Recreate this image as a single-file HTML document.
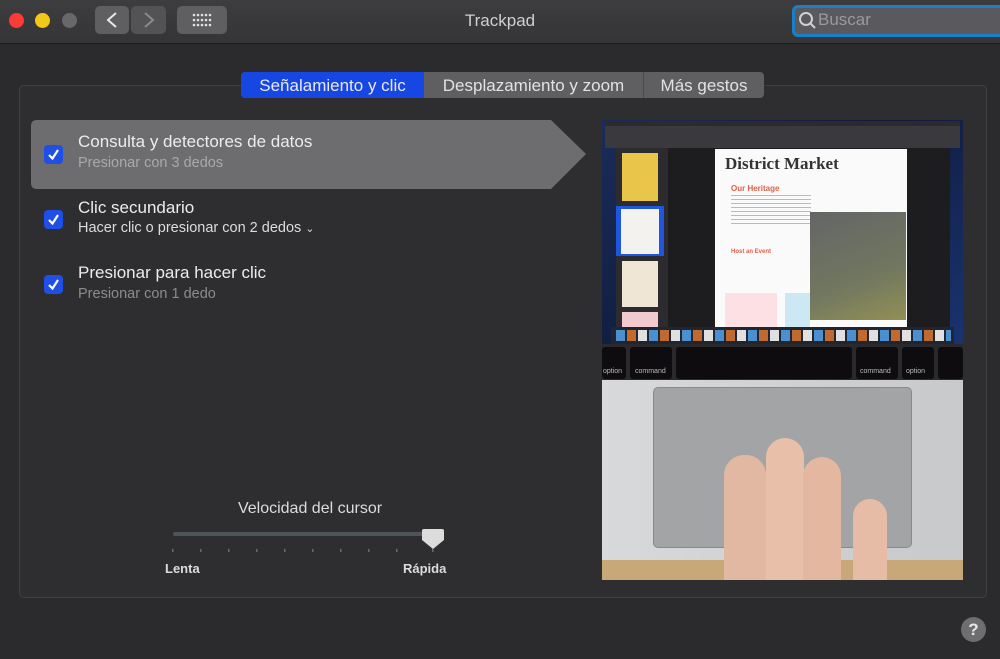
<!DOCTYPE html>
<html><head><meta charset="utf-8"><style>
*{margin:0;padding:0;box-sizing:border-box}
body{width:1000px;height:659px;background:#2b2b2d;font-family:"Liberation Sans",sans-serif;position:relative;overflow:hidden;color:#e6e6e6}
.a{position:absolute}
</style></head><body>
<div class="a" style="left:0;top:0;width:1000px;height:44px;background:linear-gradient(#3d3d40,#353537);border-bottom:1px solid #1c1c1e"></div>
<div class="a" style="left:9px;top:13px;width:15px;height:15px;border-radius:50%;background:#fb3b37"></div>
<div class="a" style="left:35px;top:13px;width:15px;height:15px;border-radius:50%;background:#f2c918"></div>
<div class="a" style="left:62px;top:13px;width:15px;height:15px;border-radius:50%;background:#68686b"></div>
<div class="a" style="left:95px;top:6px;width:34px;height:28px;border-radius:5px;background:#5f5f62"></div>
<div class="a" style="left:131px;top:6px;width:35px;height:28px;border-radius:5px;background:#535356"></div>
<svg class="a" style="left:95px;top:6px" width="71" height="28"><path d="M21 7 L13 14 L21 21" stroke="#e8e8e8" stroke-width="2" fill="none"/><path d="M50 7 L58 14 L50 21" stroke="#8a8a8c" stroke-width="2" fill="none"/></svg>
<div class="a" style="left:177px;top:6px;width:50px;height:28px;border-radius:5px;background:#5f5f62"></div>
<svg class="a" style="left:192px;top:13px" width="20" height="14"><g fill="#e0e0e0"><circle cx="2" cy="2" r="1.3"/><circle cx="6" cy="2" r="1.3"/><circle cx="10" cy="2" r="1.3"/><circle cx="14" cy="2" r="1.3"/><circle cx="18" cy="2" r="1.3"/><circle cx="2" cy="7" r="1.3"/><circle cx="6" cy="7" r="1.3"/><circle cx="10" cy="7" r="1.3"/><circle cx="14" cy="7" r="1.3"/><circle cx="18" cy="7" r="1.3"/><circle cx="2" cy="12" r="1.3"/><circle cx="6" cy="12" r="1.3"/><circle cx="10" cy="12" r="1.3"/><circle cx="14" cy="12" r="1.3"/><circle cx="18" cy="12" r="1.3"/></g></svg>
<div class="a" style="left:440px;top:11px;width:120px;text-align:center;font-size:17px;color:#cfcfcf">Trackpad</div>
<div class="a" style="left:792px;top:5px;width:215px;height:32px;border-radius:6px;border:3px solid #1b7fc7;background:#5a5a5e"></div>
<svg class="a" style="left:798px;top:11px" width="20" height="20"><circle cx="8" cy="8" r="6" stroke="#d0d0d0" stroke-width="2" fill="none"/><path d="M12 12 L17 17" stroke="#d0d0d0" stroke-width="2"/></svg>
<div class="a" style="left:818px;top:10px;font-size:17px;color:#9a9a9c">Buscar</div>

<div class="a" style="left:19px;top:85px;width:968px;height:513px;border:1px solid #3f4042;border-radius:5px;background:#2e2e30"></div>
<div class="a" style="left:241px;top:72px;width:523px;height:26px;border-radius:4px;background:#5f5f62"></div>
<div class="a" style="left:241px;top:72px;width:183px;height:26px;border-radius:4px 0 0 4px;background:#1747e3"></div>
<div class="a" style="left:643px;top:72px;width:1px;height:26px;background:#4a4a4c"></div>
<div class="a" style="left:241px;top:76px;width:183px;text-align:center;font-size:17px;color:#e8e8f0">Señalamiento y clic</div>
<div class="a" style="left:424px;top:76px;width:219px;text-align:center;font-size:17px;color:#e2e2e2">Desplazamiento y zoom</div>
<div class="a" style="left:644px;top:76px;width:120px;text-align:center;font-size:17px;color:#e2e2e2">Más gestos</div>

<svg class="a" style="left:31px;top:120px" width="556" height="70"><path d="M6 0 H520 L555 34 L520 69 H6 Q0 69 0 63 V6 Q0 0 6 0Z" fill="#6d6d70"/></svg>
<div class="a" style="left:44px;top:145px;width:19px;height:19px;border-radius:4px;background:#1f4fe6"></div>
<div class="a" style="left:44px;top:210px;width:19px;height:19px;border-radius:4px;background:#1f4fe6"></div>
<div class="a" style="left:44px;top:275px;width:19px;height:19px;border-radius:4px;background:#1f4fe6"></div>
<svg class="a" style="left:44px;top:145px" width="19" height="150"><g stroke="#fff" stroke-width="2.2" fill="none"><path d="M5 10 L8.5 13.5 L14 5"/><path d="M5 75 L8.5 78.5 L14 70"/><path d="M5 140 L8.5 143.5 L14 135"/></g></svg>
<div class="a" style="left:78px;top:132px;font-size:17px;color:#ececec">Consulta y detectores de datos</div>
<div class="a" style="left:78px;top:155px;font-size:14.5px;color:#a9a9ab">Presionar con 3 dedos</div>
<div class="a" style="left:78px;top:198px;font-size:17px;color:#ececec">Clic secundario</div>
<div class="a" style="left:78px;top:220px;font-size:14.5px;color:#dcdcdc">Hacer clic o presionar con 2 dedos <span style="font-size:11px">&#8964;</span></div>
<div class="a" style="left:78px;top:263px;font-size:17px;color:#ececec">Presionar para hacer clic</div>
<div class="a" style="left:78px;top:286px;font-size:14.5px;color:#8c8c8e">Presionar con 1 dedo</div>

<div class="a" style="left:160px;top:500px;width:300px;text-align:center;font-size:16px;color:#dcdcdc">Velocidad del cursor</div>
<div class="a" style="left:173px;top:532px;width:262px;height:4px;border-radius:2px;background:#4e5558"></div>
<svg class="a" style="left:170px;top:528px" width="280" height="30"><g fill="#6a6a6c"><rect x="2" y="21" width="1.5" height="3"/><rect x="30" y="21" width="1.5" height="3"/><rect x="58" y="21" width="1.5" height="3"/><rect x="86" y="21" width="1.5" height="3"/><rect x="114" y="21" width="1.5" height="3"/><rect x="142" y="21" width="1.5" height="3"/><rect x="170" y="21" width="1.5" height="3"/><rect x="198" y="21" width="1.5" height="3"/><rect x="226" y="21" width="1.5" height="3"/><rect x="262" y="21" width="1.5" height="3"/></g><path d="M254 1 H272 Q274 1 274 3 V12 L263 21 L252 12 V3 Q252 1 254 1Z" fill="#dcdcdc"/></svg>
<div class="a" style="left:165px;top:561px;font-size:13px;color:#dcdcdc;font-weight:bold">Lenta</div>
<div class="a" style="left:403px;top:561px;font-size:13px;color:#dcdcdc;font-weight:bold">Rápida</div>

<!-- image -->
<div class="a" style="left:602px;top:120px;width:361px;height:225px;background:linear-gradient(135deg,#1b2c5a,#0f1b3c 50%,#1a3370)"></div>
<div class="a" style="left:605px;top:121px;width:355px;height:5px;background:#2a2a30"></div>
<div class="a" style="left:605px;top:126px;width:355px;height:22px;background:#3a3a3e"></div>
<div class="a" style="left:616px;top:148px;width:52px;height:183px;background:#2c2c30"></div>
<div class="a" style="left:622px;top:153px;width:36px;height:48px;background:#e9c54a"></div>
<div class="a" style="left:616px;top:206px;width:48px;height:50px;background:#1e56e0"></div>
<div class="a" style="left:621px;top:209px;width:38px;height:45px;background:#f4f2ee"></div>
<div class="a" style="left:622px;top:261px;width:36px;height:46px;background:#efe6d6"></div>
<div class="a" style="left:622px;top:312px;width:36px;height:15px;background:#f2c9cf"></div>
<div class="a" style="left:668px;top:148px;width:282px;height:183px;background:#1d1d20"></div>
<div class="a" style="left:715px;top:149px;width:192px;height:182px;background:#fafafa"></div>
<div class="a" style="left:725px;top:154px;font-family:'Liberation Serif',serif;font-weight:bold;font-size:17px;color:#333">District Market</div>
<div class="a" style="left:731px;top:184px;font-size:8px;font-weight:bold;color:#e0604a">Our Heritage</div>
<div class="a" style="left:731px;top:195px;width:80px;height:30px;background:repeating-linear-gradient(#bbb 0 1px,transparent 1px 4px)"></div>
<div class="a" style="left:731px;top:249px;font-size:6px;font-weight:bold;color:#e0604a">Host an Event</div>
<div class="a" style="left:725px;top:293px;width:52px;height:35px;background:#fde0e4"></div>
<div class="a" style="left:785px;top:293px;width:25px;height:35px;background:#cde8f5"></div>
<div class="a" style="left:810px;top:212px;width:96px;height:108px;background:linear-gradient(160deg,#5c5e5e,#6a7058 60%,#8c8a4c);opacity:.95"></div>
<div class="a" style="left:611px;top:327px;width:343px;height:17px;background:#202530"></div>
<div class="a" style="left:616px;top:330px;width:335px;height:11px;background:repeating-linear-gradient(90deg,#4a90d0 0 9px,transparent 9px 11px,#c06a30 11px 20px,transparent 20px 22px,#e0e0e0 22px 31px,transparent 31px 33px)"></div>
<div class="a" style="left:602px;top:344px;width:361px;height:37px;background:#2a2a2c"></div>
<div class="a" style="left:602px;top:347px;width:24px;height:32px;background:#0e0c0e;border-radius:3px"></div>
<div class="a" style="left:630px;top:347px;width:42px;height:32px;background:#0e0c0e;border-radius:3px"></div>
<div class="a" style="left:676px;top:347px;width:176px;height:32px;background:#0e0c0e;border-radius:3px"></div>
<div class="a" style="left:856px;top:347px;width:42px;height:32px;background:#0e0c0e;border-radius:3px"></div>
<div class="a" style="left:902px;top:347px;width:32px;height:32px;background:#0e0c0e;border-radius:3px"></div>
<div class="a" style="left:938px;top:347px;width:25px;height:32px;background:#0e0c0e;border-radius:3px"></div>
<div class="a" style="left:603px;top:368px;font-size:7px;color:#bbb">option</div>
<div class="a" style="left:635px;top:368px;font-size:7px;color:#bbb">command</div>
<div class="a" style="left:860px;top:368px;font-size:7px;color:#bbb">command</div>
<div class="a" style="left:906px;top:368px;font-size:7px;color:#bbb">option</div>
<div class="a" style="left:602px;top:380px;width:361px;height:182px;background:linear-gradient(90deg,#d8d9db,#c8c9cb)"></div>
<div class="a" style="left:602px;top:560px;width:361px;height:20px;background:#c8a878"></div>
<div class="a" style="left:653px;top:387px;width:259px;height:161px;border-radius:5px;background:#a3a4a6;border:1px solid #8a8a8c"></div>
<div class="a" style="left:724px;top:455px;width:42px;height:125px;border-radius:20px 20px 0 0;background:#e3b8a2"></div>
<div class="a" style="left:766px;top:438px;width:38px;height:142px;border-radius:19px 19px 0 0;background:#e8bfa8"></div>
<div class="a" style="left:803px;top:457px;width:38px;height:123px;border-radius:19px 19px 0 0;background:#e3b7a0"></div>
<div class="a" style="left:853px;top:499px;width:34px;height:81px;border-radius:17px 17px 0 0;background:#e6bca6"></div>

<div class="a" style="left:961px;top:617px;width:25px;height:25px;border-radius:50%;background:#6e6e71;color:#e8e8e8;font-size:17px;font-weight:bold;text-align:center;line-height:25px">?</div>
</body></html>
